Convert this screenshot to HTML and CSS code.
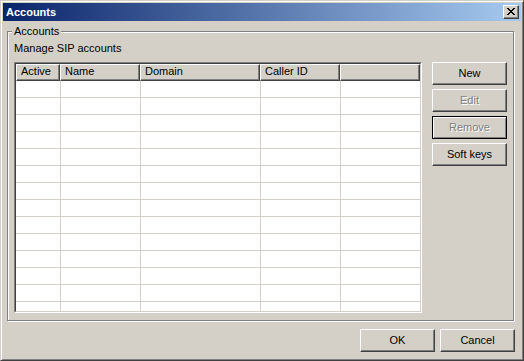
FILE: index.html
```html
<!DOCTYPE html>
<html>
<head>
<meta charset="utf-8">
<title>Accounts</title>
<link rel="stylesheet" href="styles.css">
</head>
<body>
<div class="window">
  <div class="titlebar">
    <span class="title">Accounts</span>
    <div class="close-btn">
      <svg width="8" height="7" viewBox="0 0 8 7" shape-rendering="crispEdges"><path fill="#000" d="M0 0h2v1H0zM6 0h2v1H6zM1 1h2v1H1zM5 1h2v1H5zM2 2h4v1H2zM3 3h2v1H3zM2 4h4v1H2zM1 5h2v1H1zM5 5h2v1H5zM0 6h2v1H0zM6 6h2v1H6z"/></svg>
    </div>
  </div>
  <div class="body">
    <div class="group">
      <span class="group-label">Accounts</span>
      <div class="desc">Manage SIP accounts</div>
      <div class="group-row">
        <div class="list">
          <div class="list-inner">
            <div class="lv-head">
              <div class="hcell h1">Active</div>
              <div class="hcell h2">Name</div>
              <div class="hcell h3">Domain</div>
              <div class="hcell h4">Caller ID</div>
              <div class="hcell h5"></div>
            </div>
            <div class="lv-row"><div class="cell c1"></div><div class="cell c2"></div><div class="cell c3"></div><div class="cell c4"></div><div class="cell c5"></div></div>
            <div class="lv-row"><div class="cell c1"></div><div class="cell c2"></div><div class="cell c3"></div><div class="cell c4"></div><div class="cell c5"></div></div>
            <div class="lv-row"><div class="cell c1"></div><div class="cell c2"></div><div class="cell c3"></div><div class="cell c4"></div><div class="cell c5"></div></div>
            <div class="lv-row"><div class="cell c1"></div><div class="cell c2"></div><div class="cell c3"></div><div class="cell c4"></div><div class="cell c5"></div></div>
            <div class="lv-row"><div class="cell c1"></div><div class="cell c2"></div><div class="cell c3"></div><div class="cell c4"></div><div class="cell c5"></div></div>
            <div class="lv-row"><div class="cell c1"></div><div class="cell c2"></div><div class="cell c3"></div><div class="cell c4"></div><div class="cell c5"></div></div>
            <div class="lv-row"><div class="cell c1"></div><div class="cell c2"></div><div class="cell c3"></div><div class="cell c4"></div><div class="cell c5"></div></div>
            <div class="lv-row"><div class="cell c1"></div><div class="cell c2"></div><div class="cell c3"></div><div class="cell c4"></div><div class="cell c5"></div></div>
            <div class="lv-row"><div class="cell c1"></div><div class="cell c2"></div><div class="cell c3"></div><div class="cell c4"></div><div class="cell c5"></div></div>
            <div class="lv-row"><div class="cell c1"></div><div class="cell c2"></div><div class="cell c3"></div><div class="cell c4"></div><div class="cell c5"></div></div>
            <div class="lv-row"><div class="cell c1"></div><div class="cell c2"></div><div class="cell c3"></div><div class="cell c4"></div><div class="cell c5"></div></div>
            <div class="lv-row"><div class="cell c1"></div><div class="cell c2"></div><div class="cell c3"></div><div class="cell c4"></div><div class="cell c5"></div></div>
            <div class="lv-row"><div class="cell c1"></div><div class="cell c2"></div><div class="cell c3"></div><div class="cell c4"></div><div class="cell c5"></div></div>
            <div class="lv-row"><div class="cell c1"></div><div class="cell c2"></div><div class="cell c3"></div><div class="cell c4"></div><div class="cell c5"></div></div>
          </div>
        </div>
        <div class="side-buttons">
          <div class="btn">New</div>
          <div class="btn disabled">Edit</div>
          <div class="btn disabled focus">Remove</div>
          <div class="btn">Soft keys</div>
        </div>
      </div>
    </div>
    <div class="footer">
      <div class="btn">OK</div>
      <div class="btn">Cancel</div>
    </div>
  </div>
</div>
</body>
</html>
```

FILE: styles.css
```css
* {
  box-sizing: border-box;
}

html, body {
  margin: 0;
  padding: 0;
  background: #d4d0c8;
}

body {
  width: 524px;
  height: 361px;
  overflow: hidden;
  font-family: "Liberation Sans", Arial, sans-serif;
  font-size: 11px;
  line-height: 13px;
  color: #000;
}

.window {
  width: 524px;
  height: 361px;
  background: #d4d0c8;
  border: 1px solid;
  border-color: #d4d0c8 #404040 #404040 #d4d0c8;
  box-shadow: inset 1px 1px 0 #fff, inset -1px -1px 0 #808080;
  padding: 2px;
  display: flex;
  flex-direction: column;
}

.titlebar {
  flex: none;
  height: 18px;
  display: flex;
  align-items: center;
  justify-content: space-between;
  padding: 0 2px 0 3px;
  background: linear-gradient(to right, #0a246a, #a6caf0);
  color: #fff;
  font-weight: bold;
  line-height: 18px;
}

.close-btn {
  width: 16px;
  height: 14px;
  background: #d4d0c8;
  border: 1px solid;
  border-color: #fff #404040 #404040 #fff;
  box-shadow: inset -1px -1px 0 #808080;
  display: flex;
  align-items: center;
  justify-content: center;
  padding: 0 1px 1px 0;
}

.close-btn svg {
  display: block;
}

.body {
  flex: 1;
  display: flex;
  flex-direction: column;
  padding: 10px 6px 6px 4px;
}

.group {
  position: relative;
  margin-right: 1px;
  border: 1px solid #808080;
  box-shadow: inset 1px 1px 0 #fff, 1px 1px 0 #fff;
  padding: 10px 6px 7px 6px;
}

.group-label {
  position: absolute;
  left: 4px;
  top: -7px;
  padding: 0 2px;
  background: #d4d0c8;
  line-height: 13px;
}

.desc {
  height: 13px;
  margin-bottom: 7px;
}

.group-row {
  display: flex;
  gap: 10px;
}

.list {
  width: 408px;
  height: 251px;
  border: 1px solid;
  border-color: #808080 #fff #fff #808080;
}

.list-inner {
  height: 100%;
  border: 1px solid;
  border-color: #404040 #d4d0c8 #d4d0c8 #404040;
  background: #fff;
  overflow: hidden;
}

.lv-head {
  display: flex;
}

.hcell {
  height: 17px;
  flex: none;
  background: #d4d0c8;
  border: 1px solid;
  border-color: #fff #404040 #404040 #fff;
  box-shadow: inset -1px -1px 0 #808080;
  padding-left: 4px;
  white-space: nowrap;
  overflow: hidden;
}

.h1 { width: 44px; }
.h2 { width: 80px; }
.h3 { width: 120px; }
.h4 { width: 80px; }
.h5 { flex: 1; }

.lv-row {
  display: flex;
  height: 17px;
  border-bottom: 1px solid #d4d0c8;
}

.cell {
  flex: none;
  border-right: 1px solid #d4d0c8;
}

.c1 { width: 45px; }
.c2 { width: 80px; }
.c3 { width: 120px; }
.c4 { width: 80px; }
.c5 { flex: 1; border-right: none; }

.side-buttons {
  display: flex;
  flex-direction: column;
  gap: 4px;
}

.btn {
  width: 75px;
  height: 23px;
  flex: none;
  display: flex;
  align-items: center;
  justify-content: center;
  background: #d4d0c8;
  border: 1px solid;
  border-color: #fff #404040 #404040 #fff;
  box-shadow: inset -1px -1px 0 #808080;
  white-space: nowrap;
}

.btn.disabled {
  color: #808080;
  text-shadow: 1px 1px 0 #fff;
}

.btn.focus {
  border-color: #000;
  box-shadow: inset 1px 1px 0 #fff, inset -1px -1px 0 #808080;
}

.footer {
  display: flex;
  justify-content: flex-end;
  gap: 5px;
  margin-top: 8px;
}
```
